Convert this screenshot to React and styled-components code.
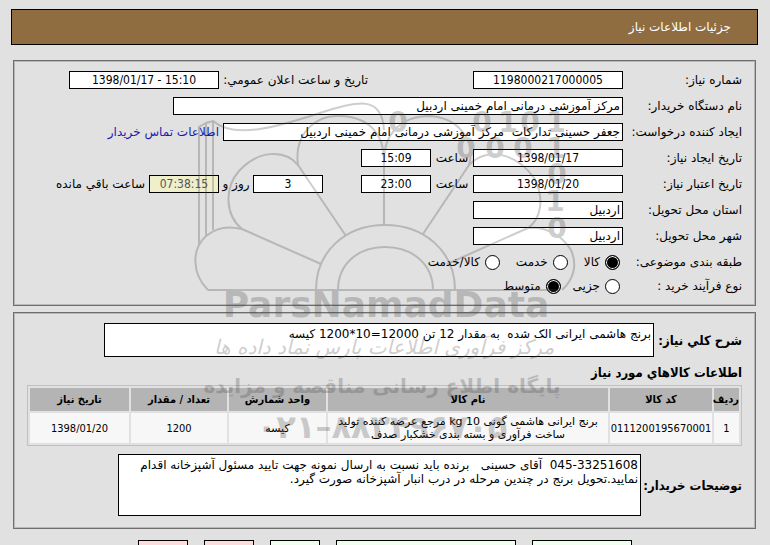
import styled, { createGlobalStyle } from "styled-components";

const GlobalStyle = createGlobalStyle`
  * {
    box-sizing: border-box;
  }

  body {
    margin: 0;
    background: #e1e1e1;
    color: #000;
    font-family: "DejaVu Sans", sans-serif;
    font-size: 12px;
    overflow: hidden;
  }

  input,
  textarea,
  button {
    font: inherit;
    color: inherit;
  }
`;

const Page = styled.div`
  position: relative;
  padding: 9px 12px 0 11px;
  height: 100vh;
  overflow: hidden;
`;

const Header = styled.header`
  display: flex;
  align-items: center;
  height: 36px;
  padding: 0 26px;
  border: 1px solid #000;
  background: #8f6d40;
  color: #fff;
`;

const Title = styled.h1`
  margin: 0;
  font-size: 12px;
  font-weight: normal;
`;

const Panel = styled.section`
  margin: ${(p) => p.$top}px 2px 0;
  padding: ${(p) => p.$padding};
  border: 1px solid #6e6e6e;
  box-shadow: inset 0 0 0 1px #b8b8b8;
`;

const Row = styled.div`
  display: flex;
  align-items: center;
  height: ${(p) => (p.$short ? 22 : 26)}px;
  white-space: nowrap;
`;

const Label = styled.label`
  flex: none;
  width: ${(p) => p.$width || 119}px;
`;

const GroupLabel = styled.span`
  flex: none;
  width: 122px;
`;

const Input = styled.input`
  flex: none;
  width: ${(p) => p.$width}px;
  height: 18px;
  padding: 0 2px;
  border: 1px solid #000;
  border-radius: 0;
  background: ${(p) => (p.$timer ? "#efefcb" : "#fff")};
  color: ${(p) => (p.$timer ? "#555" : "#000")};
  text-align: right;
`;

const NumberInput = styled(Input)`
  font-family: "DejaVu Sans Condensed", "DejaVu Sans", sans-serif;
  text-align: center;
`;

const Unit = styled.span`
  flex: none;
  width: ${(p) => p.$width}px;
  text-align: center;
`;

const Spacer = styled.span`
  flex: none;
  width: ${(p) => p.$width}px;
`;

const ContactLink = styled.a`
  margin-right: 4px;
  color: #1a1ab0;
  text-decoration: none;
`;

const Remaining = styled.span`
  margin-right: 4px;
`;

const Options = styled.div`
  display: flex;
  gap: ${(p) => p.$gap}px;
`;

const Option = styled.label`
  display: flex;
  align-items: center;
  gap: 5px;
`;

const Radio = styled.input`
  appearance: none;
  width: 15px;
  height: 15px;
  margin: 0;
  border: 1px solid #000;
  border-radius: 50%;
  background: #fff;

  &:checked {
    background: #000;
    box-shadow: inset 0 0 0 1px #fff;
  }
`;

const TextRow = styled.div`
  display: flex;
  align-items: center;
  margin-top: ${(p) => p.$top || 0}px;
`;

const TextLabel = styled.label`
  flex: none;
  width: ${(p) => p.$width}px;
  font-family: "DejaVu Sans Condensed", "DejaVu Sans", sans-serif;
  font-size: 13px;
  font-weight: bold;
  white-space: nowrap;
`;

const TextArea = styled.textarea`
  display: block;
  flex: none;
  width: ${(p) => p.$width}px;
  height: ${(p) => p.$height}px;
  padding: 3px 2px;
  border: 1px solid #000;
  border-radius: 0;
  background: #fff;
  line-height: 14px;
  resize: none;
  overflow: hidden;
`;

const SectionTitle = styled.h2`
  margin: 8px 0 4px;
  font-family: "DejaVu Sans Condensed", "DejaVu Sans", sans-serif;
  font-size: 13px;
  line-height: 16px;
`;

const Table = styled.table`
  width: 100%;
  table-layout: fixed;
  border: 1px solid #c0c0c0;
  border-collapse: separate;
  border-spacing: 2px;
  line-height: 13px;
  text-align: center;
`;

const Th = styled.th`
  width: ${(p) => (p.$width ? `${p.$width}px` : "auto")};
  height: 23px;
  padding: 0;
  background: #b4b4b4;
  font-family: "DejaVu Sans Condensed", "DejaVu Sans", sans-serif;
  font-size: 11px;
  white-space: nowrap;
`;

const Td = styled.td`
  height: 30px;
  padding: 0;
  background: #f7f7f7;
  font-size: 11px;
`;

const NumberTd = styled(Td)`
  font-family: "DejaVu Sans Condensed", "DejaVu Sans", sans-serif;
`;

const Actions = styled.footer`
  display: flex;
  justify-content: center;
  gap: 16px;
  margin-top: 11px;
`;

const Action = styled.button`
  width: ${(p) => p.$width}px;
  height: 24px;
  padding: 0;
  border: 1px solid #000;
  border-radius: 0;
  background: ${(p) => (p.$pink ? "#ffdcdc" : "#eeffee")};
`;

const Mark = styled.svg`
  position: absolute;
  top: 90px;
  left: 50%;
  width: 400px;
  height: 370px;
  margin-left: -200px;
  opacity: 0.26;
  pointer-events: none;
`;

const columns = [
  { title: "ردیف", width: 25 },
  { title: "کد کالا", width: 102 },
  { title: "نام کالا" },
  { title: "واحد شمارش", width: 97 },
  { title: "تعداد / مقدار", width: 96 },
  { title: "تاریخ نیاز", width: 99 },
];

const items = [
  {
    row: "1",
    code: "0111200195670001",
    name: "برنج ایرانی هاشمی گونی 10 kg مرجع عرضه کننده تولید ساخت فرآوری و بسته بندی خشکبار صدف",
    unit: "کیسه",
    amount: "1200",
    date: "1398/01/20",
  },
];

const digits = [
  ["0", 398, 132],
  ["0", 482, 132],
  ["1", 508, 132],
  ["0", 530, 132],
  ["1", 556, 132],
  ["0", 466, 158],
  ["0", 495, 158],
  ["0", 523, 158],
  ["1", 556, 158],
  ["0", 557, 184],
  ["1", 555, 211],
  ["0", 557, 238],
];

function Watermark() {
  return (
    <Mark viewBox="185 90 400 370" aria-hidden="true" direction="ltr">
      <g fill="none" stroke="#444" strokeWidth="2">
        <path d="M208 290H559" />
        <path d="M316 290C316 251 346 225 385 225S455 251 455 290" />
        <path d="M338 290C338 264 358 247 385 247S433 264 433 290" />
        <path d="M208 290C192 274 191 250 206 236C218 226 230 226 242 229L321 264" />
        <path d="M242 229C225 215 224 188 239 171C258 150 285 149 298 165L346 236" />
        <path d="M298 165C294 135 314 115 340 116C370 117 384 135 384 160V225" />
        <path d="M384 160C384 135 400 116 430 116C458 118 476 140 469 165L423 234" />
        <path d="M469 165C488 145 518 155 534 178C545 198 541 219 528 228L447 264" />
        <path d="M528 228C545 226 562 235 571 250C578 266 573 280 562 290" />
        <path d="M199 246V127L206 123V236M206 123L213 121V230" />
        <path d="M213 121C235 140 280 126 320 113S382 96 384 130" />
      </g>
      <g fill="#444" fontFamily="DejaVu Sans, sans-serif" fontWeight="bold" textAnchor="middle">
        <g fontSize="28">
          {digits.map(([digit, x, y]) => (
            <text key={`${x}-${y}`} x={x} y={y}>
              {digit}
            </text>
          ))}
        </g>
        <text x="386" y="317" fontSize="36">
          ParsNamadData
        </text>
        <text x="384" y="354" fontSize="20" fontWeight="normal" fontStyle="italic">
          مرکز فرآوری اطلاعات پارس نماد داده ها
        </text>
        <text x="382" y="393" fontSize="20">
          پایگاه اطلاع رسانی مناقصه و مزایده
        </text>
        <text x="382" y="438" fontSize="32">
          ۰۲۱–۸۸۳۴۹۶۷۰۵
        </text>
      </g>
    </Mark>
  );
}

function RadioRow({ label, name, options, selected, gap, short }) {
  return (
    <Row $short={short} role="radiogroup" aria-label={label}>
      <GroupLabel>{label}</GroupLabel>
      <Options $gap={gap}>
        {options.map((option) => (
          <Option key={option}>
            <Radio type="radio" name={name} defaultChecked={option === selected} />
            {option}
          </Option>
        ))}
      </Options>
    </Row>
  );
}

export default function App() {
  return (
    <Page dir="rtl">
      <GlobalStyle />
      <Header>
        <Title>جزئیات اطلاعات نیاز</Title>
      </Header>

      <Panel $top={15} $padding="6px 13px 8px">
        <Row>
          <Label htmlFor="number">شماره نیاز:</Label>
          <NumberInput id="number" $width={150} defaultValue="1198000217000005" />
          <Spacer $width={105} />
          <Label htmlFor="announced" $width={149}>
            تاریخ و ساعت اعلان عمومي:
          </Label>
          <NumberInput id="announced" $width={150} defaultValue="15:10 - 1398/01/17" />
        </Row>
        <Row>
          <Label htmlFor="buyer">نام دستگاه خریدار:</Label>
          <Input id="buyer" $width={450} defaultValue="مرکز آموزشی درمانی امام خمینی اردبیل" />
        </Row>
        <Row>
          <Label htmlFor="creator">ایجاد کننده درخواست:</Label>
          <Input
            id="creator"
            $width={400}
            defaultValue="جعفر حسینی تدارکات  مرکز آموزشی درمانی امام خمینی اردبیل"
          />
          <ContactLink href="#contact">اطلاعات تماس خریدار</ContactLink>
        </Row>
        <Row>
          <Label htmlFor="created">تاریخ ایجاد نیاز:</Label>
          <NumberInput id="created" $width={150} defaultValue="1398/01/17" />
          <Unit $width={42}>ساعت</Unit>
          <NumberInput aria-label="ساعت" $width={70} defaultValue="15:09" />
        </Row>
        <Row>
          <Label htmlFor="expires">تاریخ اعتبار نیاز:</Label>
          <NumberInput id="expires" $width={150} defaultValue="1398/01/20" />
          <Unit $width={42}>ساعت</Unit>
          <NumberInput aria-label="ساعت" $width={70} defaultValue="23:00" />
          <Spacer $width={38} />
          <NumberInput aria-label="روز" $width={70} defaultValue="3" />
          <Unit $width={34}>روز و</Unit>
          <NumberInput aria-label="ساعت باقي مانده" $width={70} $timer defaultValue="07:38:15" />
          <Remaining>ساعت باقي مانده</Remaining>
        </Row>
        <Row>
          <Label htmlFor="province">استان محل تحویل:</Label>
          <Input id="province" $width={150} defaultValue="اردبیل" />
        </Row>
        <Row>
          <Label htmlFor="city">شهر محل تحویل:</Label>
          <Input id="city" $width={150} defaultValue="اردبیل" />
        </Row>
        <RadioRow
          label="طبقه بندی موضوعی:"
          name="category"
          options={["کالا", "خدمت", "کالا/خدمت"]}
          selected="کالا"
          gap={16}
        />
        <RadioRow
          label="نوع فرآیند خرید :"
          name="process"
          options={["جزیی", "متوسط"]}
          selected="متوسط"
          gap={12}
          short
        />
      </Panel>

      <Panel $top={6} $padding="10px 13px 12px">
        <TextRow>
          <TextLabel htmlFor="summary" $width={88}>
            شرح کلي نیاز:
          </TextLabel>
          <TextArea
            id="summary"
            $width={550}
            $height={34}
            defaultValue="برنج هاشمی ایرانی الک شده  به مقدار 12 تن 12000=10*1200 کیسه"
          />
        </TextRow>
        <SectionTitle>اطلاعات کالاهاي مورد نیاز</SectionTitle>
        <Table>
          <thead>
            <tr>
              {columns.map((column) => (
                <Th key={column.title} $width={column.width}>
                  {column.title}
                </Th>
              ))}
            </tr>
          </thead>
          <tbody>
            {items.map((item) => (
              <tr key={item.row}>
                <NumberTd>{item.row}</NumberTd>
                <NumberTd>{item.code}</NumberTd>
                <Td>{item.name}</Td>
                <Td>{item.unit}</Td>
                <NumberTd>{item.amount}</NumberTd>
                <NumberTd>{item.date}</NumberTd>
              </tr>
            ))}
          </tbody>
        </Table>
        <TextRow $top={8}>
          <TextLabel htmlFor="notes" $width={101}>
            توضیحات خریدار:
          </TextLabel>
          <TextArea
            id="notes"
            $width={523}
            $height={62}
            defaultValue="045-33251608  آقای حسینی   برنده باید نسبت به ارسال نمونه جهت تایید مسئول آشپزخانه اقدام نمایید.تحویل برنج در چندین مرحله در درب انبار آشپزخانه صورت گیرد."
          />
        </TextRow>
      </Panel>

      <Actions>
        <Action $width={100} />
        <Action $width={180} />
        <Action $width={50} />
        <Action $width={50} $pink />
        <Action $width={50} $pink />
      </Actions>

      <Watermark />
    </Page>
  );
}
